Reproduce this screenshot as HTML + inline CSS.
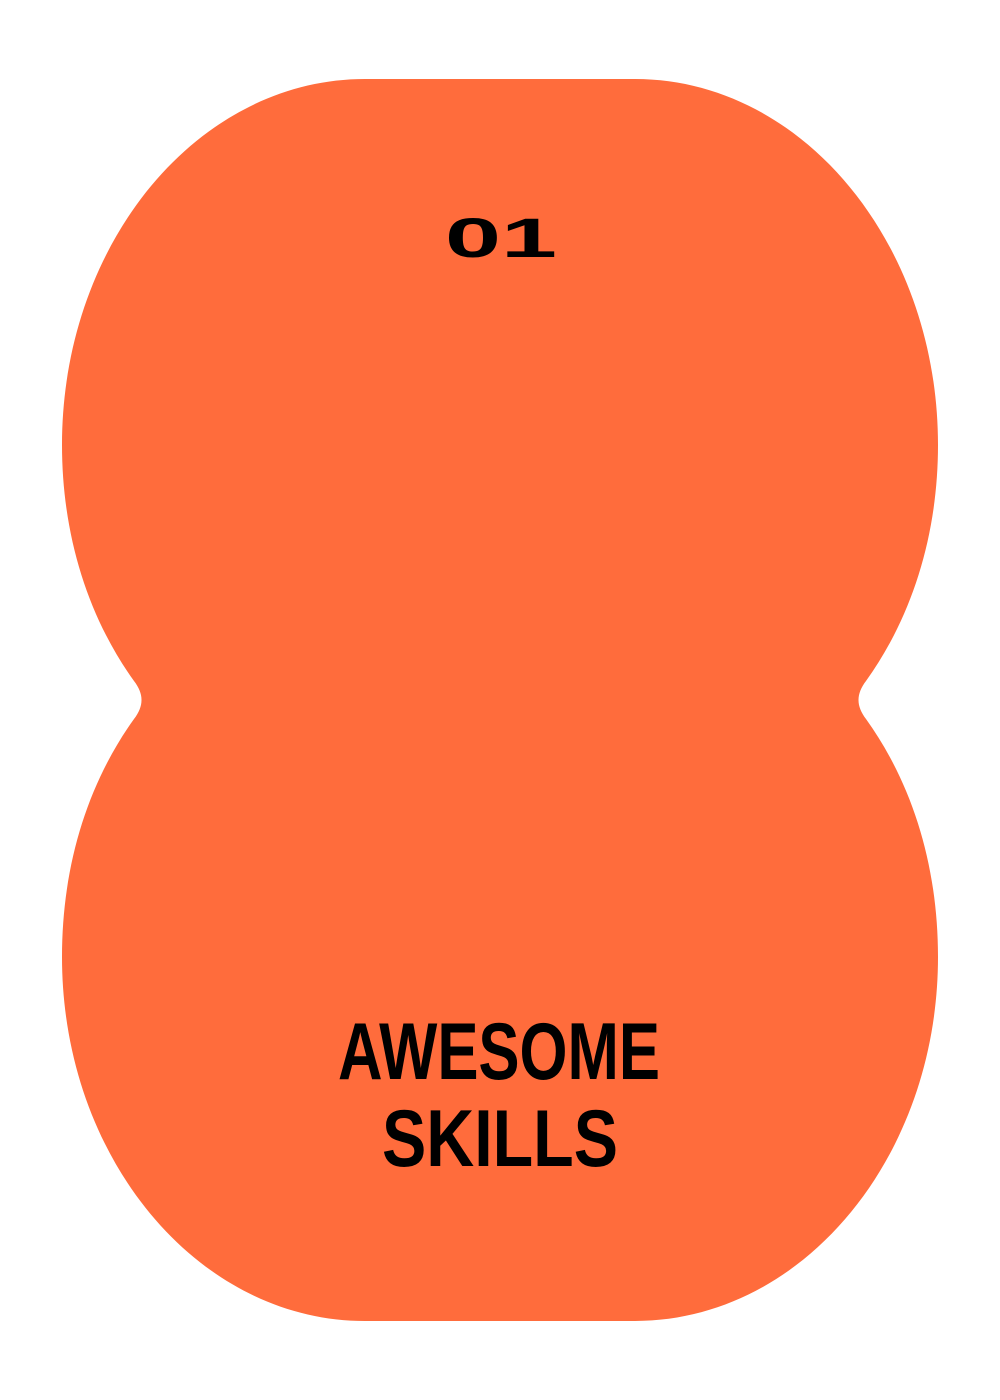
<!DOCTYPE html>
<html><head><meta charset="utf-8"><style>html,body{margin:0;padding:0;background:#fff;width:1000px;height:1400px;overflow:hidden}</style></head>
<body>
<svg width="1000" height="1400" viewBox="0 0 1000 1400" xmlns="http://www.w3.org/2000/svg">
<path fill="#FF6C3C" d="M365,79 L635,79 C802,79 938,243 938,445 C938,535 912,617 866,681 C856,694 856,706 866,719 C912,783 938,865 938,957 C938,1158 802,1321 635,1321 L365,1321 C198,1321 62,1158 62,957 C62,865 88,783 134,719 C144,706 144,694 134,681 C88,617 62,535 62,445 C62,243 198,79 365,79 Z"/>
<text x="445" y="257" font-family="Liberation Sans, sans-serif" font-weight="bold" font-size="56" textLength="112" lengthAdjust="spacingAndGlyphs">01</text>
<text x="338" y="1079" font-family="Liberation Sans, sans-serif" font-weight="bold" font-size="81" textLength="322" lengthAdjust="spacingAndGlyphs">AWESOME</text>
<text x="382" y="1166" font-family="Liberation Sans, sans-serif" font-weight="bold" font-size="81" textLength="236" lengthAdjust="spacingAndGlyphs">SKILLS</text>
</svg>
</body></html>
